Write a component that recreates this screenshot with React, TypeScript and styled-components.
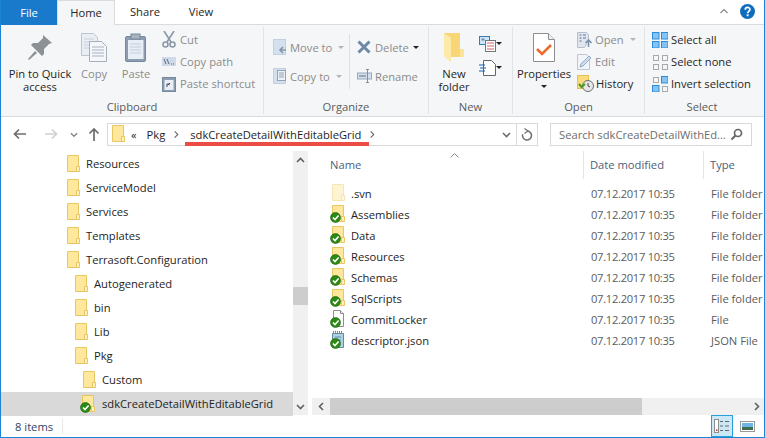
import React from "react";
import styled, { createGlobalStyle } from "styled-components";

const Global = createGlobalStyle`
  html, body { margin: 0; padding: 0; background: #fff; }
  body { font-family: "Open Sans", "Noto Sans", "Liberation Sans", sans-serif; font-size: 11.2px; color: #1e1e1e; }
  * { box-sizing: border-box; }
`;

const Win = styled.div`
  width: 765px; height: 438px; display: flex; flex-direction: column; background: #fff; overflow: hidden; position: relative;
  border-left: 1px solid #1b84d6; border-right: 1px solid #1b84d6; border-bottom: 1px solid #1b84d6;
`;
const TabBar = styled.div`height: 25px; display: flex; align-items: stretch; border-bottom: 1px solid #dadbdc; position: relative;`;
const FileTab = styled.div`width: 56px; background: #1979ca; color: #fff; display: flex; align-items: center; justify-content: center; margin-bottom: -1px;`;
const Tab = styled.div<{ $w: number; $active?: boolean }>`
  width: ${p => p.$w}px; display: flex; align-items: center; justify-content: center; color: #262626;
  ${p => p.$active ? "background:#f5f6f7;border:1px solid #dadbdc;border-bottom:none;margin-bottom:-1px;" : ""}
`;
const TabEnd = styled.div`margin-left: auto; display: flex; align-items: center; gap: 11px; padding-right: 9px;`;
const Ribbon = styled.div`height: 92px; background: #f5f6f7; border-bottom: 1px solid #dadbdc; display: flex; padding-top: 2px;`;
const Group = styled.div<{ $w: number; $last?: boolean }>`
  width: ${p => p.$w}px; height: 87px; display: flex; flex-direction: column; flex: none;
  border-right: ${p => p.$last ? "none" : "1px solid #e2e3e4"};
`;
const GroupBody = styled.div`flex: 1; display: flex; min-height: 0;`;
const GroupLabel = styled.div`height: 15px; line-height: 15px; text-align: center; color: #5b5b5b;`;
const Large = styled.div<{ $w: number; $dim?: boolean; $ml?: number }>`
  width: ${p => p.$w}px; margin-left: ${p => p.$ml ?? 0}px; display: flex; flex-direction: column; align-items: center; text-align: center; line-height: 13px; padding-top: 6px; flex: none;
  color: ${p => p.$dim ? "#8c8c8c" : "#262626"};
  & > svg { height: 29px; margin-bottom: 5px; flex: none; }
`;
const SmallCol = styled.div<{ $ml?: number; $rh?: number; $pt?: number; $w?: number }>`
  margin-left: ${p => p.$ml ?? 0}px; padding-top: ${p => p.$pt ?? 2}px; display: flex; flex-direction: column; flex: none;
  ${p => p.$w ? `width: ${p.$w}px;` : ""}
  & > div { height: ${p => p.$rh ?? 22}px; }
`;
const SmallRow = styled.div<{ $dim?: boolean; $gap?: number }>`
  display: flex; align-items: center; gap: ${p => p.$gap ?? 3}px; white-space: nowrap;
  color: ${p => p.$dim ? "#8c8c8c" : "#262626"};
  & > svg { flex: none; }
`;
const VDivider = styled.div<{ $ml: number }>`width: 1px; height: 55px; margin: 7px 0 0 ${p => p.$ml}px; background: #dfe0e1; flex: none;`;
const MiniCaret = styled.span<{ $dark?: boolean; $ml?: number }>`
  width: 0; height: 0; border-left: 3.5px solid transparent; border-right: 3.5px solid transparent;
  border-top: 3.5px solid ${p => p.$dark ? "#222" : "#b4b4b4"}; display: inline-block; margin-left: ${p => p.$ml ?? 3}px; flex: none;
`;
const CaretLine = styled.div`height: 13px; display: flex; align-items: center; justify-content: center; & > span { margin: 0; }`;

const AddressRow = styled.div`height: 34px; display: flex; align-items: center; position: relative; padding-top: 1px;`;
const NavBtns = styled.div`width: 106px; display: flex; align-items: center; flex: none; padding-left: 12px;`;
const AddressBox = styled.div`width: 431px; height: 23px; border: 1px solid #d9d9d9; display: flex; align-items: center; flex: none; padding-left: 3px;`;
const Crumb = styled.span<{ $ml: number }>`margin-left: ${p => p.$ml}px; white-space: nowrap; color: #1e1e1e; display: flex; align-items: center;`;
const AddrEnd = styled.div`margin-left: auto; display: flex; align-items: center; height: 100%;`;
const RefreshBox = styled.div`width: 21px; height: 21px; border-left: 1px solid #d9d9d9; margin-left: 5px; display: flex; align-items: center; justify-content: center;`;
const SearchBox = styled.div`
  width: 202px; height: 23px; margin-left: 12px; border: 1px solid #d9d9d9; display: flex; align-items: center; justify-content: space-between;
  padding: 0 8px; color: #6d6d6d; flex: none; white-space: nowrap; font-size: 11.2px;
`;
const RedLine = styled.div`position: absolute; left: 184px; top: 25px; width: 184px; height: 4px; background: #ec4b46;`;

const Main = styled.div`height: 265px; display: flex; min-height: 0;`;
const NavPane = styled.div`width: 292px; display: flex; flex-direction: column; padding-top: 1px; flex: none;`;
const NavRow = styled.div<{ $indent: number; $sel?: boolean }>`
  height: 24px; flex: none; display: flex; align-items: center; padding-left: ${p => p.$indent}px; gap: ${p => p.$sel ? 7 : 5}px; white-space: nowrap; color: #1e1e1e;
  background: ${p => p.$sel ? "#d9d9d9" : "transparent"};
`;
const VScroll = styled.div`width: 15px; background: #f0f0f0; display: flex; flex-direction: column; align-items: center; justify-content: space-between; flex: none; position: relative; padding: 5px 0 4px;`;
const VThumb = styled.div`position: absolute; left: 0; top: 136px; width: 15px; height: 18px; background: #cdcdcd;`;
const ListPane = styled.div`margin-left: 4px; flex: 1; min-width: 0; display: flex; flex-direction: column; position: relative;`;
const Head = styled.div`height: 28px; display: flex; flex: none; color: #4c607a;`;
const HeadCell = styled.div<{ $w: number; $pl: number; $sep?: boolean }>`
  width: ${p => p.$w}px; padding-left: ${p => p.$pl}px; flex: none; display: flex; align-items: center; padding-bottom: 1px;
  border-right: ${p => p.$sep ? "1px solid #e5e5e5" : "none"};
`;
const SortCaret = styled.svg`position: absolute; left: 138px; top: 2px;`;
const Rows = styled.div`flex: 1; padding-top: 4px; min-height: 0;`;
const Row = styled.div`height: 21px; display: flex; align-items: center; white-space: nowrap;`;
const NameCell = styled.div`width: 273px; padding-left: 18px; display: flex; align-items: center; gap: 6px; flex: none; color: #1e1e1e;`;
const DateCell = styled.div`width: 120px; padding-left: 6px; color: #5c5c5c; flex: none; letter-spacing: -0.3px;`;
const TypeCell = styled.div`padding-left: 6px; color: #5c5c5c; overflow: hidden;`;
const HScroll = styled.div`height: 17px; background: #f0f0f0; display: flex; align-items: center; justify-content: space-between; flex: none; position: relative; padding: 0 3px 0 5px;`;
const HThumb = styled.div`position: absolute; left: 18px; top: 0; width: 312px; height: 17px; background: #cdcdcd;`;
const Status = styled.div`flex: 1; display: flex; align-items: center; padding-left: 14px; color: #2f4466; position: relative;`;
const StatusSep = styled.div`width: 1px; height: 16px; background: #e8e8e8; margin-left: 9px;`;
const ViewBtns = styled.div`margin-left: auto; display: flex; align-items: center; gap: 3px; padding-right: 6px;`;
const ViewBtn = styled.div<{ $on?: boolean }>`
  width: 22px; height: 22px; display: flex; align-items: center; justify-content: center;
  ${p => p.$on ? "background:#cce8f7;border:1px solid #26a0da;" : ""}
`;

const Check = () => (
  <g>
    <circle cx="5.5" cy="12.5" r="5" fill="#2a8a14" stroke="#1c5e10" strokeWidth=".6" />
    <path d="M3 12.5l2 2 3.600-4" fill="none" stroke="#fff" strokeWidth="1.600" />
  </g>
);
const FolderShape = ({ x = 0, light }: { x?: number; light?: boolean }) => (
  <g opacity={light ? 0.45 : 1}>
    <path d={`M${x + .5} .5h11v16h-11z`} fill="#ffe89b" stroke="#e8c662" />
    <path d={`M${x + 9.500} 11.500h3v5h-3z`} fill="#fff2bd" stroke="#e8c662" />
  </g>
);
const Folder = ({ check, light }: { check?: boolean; light?: boolean }) => (
  <svg width="15" height="18" viewBox="0 0 15 18" style={{ flex: "none" }}>
    <FolderShape x={check || light ? 2 : 1} light={light} />
    {check && <Check />}
  </svg>
);
const FileIcon = () => (
  <svg width="15" height="18" viewBox="0 0 15 18" style={{ flex: "none" }}>
    <path d="M3.500 .5h7l3 3v13h-10z" fill="#fff" stroke="#8d8d8d" />
    <path d="M10.500 .5v3h3" fill="#eee" stroke="#8d8d8d" />
    <Check />
  </svg>
);
const JsonIcon = () => (
  <svg width="15" height="18" viewBox="0 0 15 18" style={{ flex: "none" }}>
    <path d="M2.500 2.500h11v14h-11z" fill="#a9d3e6" stroke="#6a8a99" />
    <path d="M3 .8h10" stroke="#777" strokeDasharray="1 1" strokeWidth="2" />
    <path d="M5 6h6M5 9h6" stroke="#5e8ea5" />
    <Check />
  </svg>
);
const Pin = () => (
  <svg width="30" height="29" viewBox="0 0 30 29">
    <path d="M18 2l9 8-3 1-5 5 0 5-2 2-11-11 2-2 5 0 5-5z" fill="#8b9196" />
    <path d="M10 18l-7 8 1 1 8-7z" fill="#8b9196" />
  </svg>
);
const DocCopy = () => (
  <svg width="26" height="29" viewBox="0 0 26 29">
    <path d="M.5 .5h12l4 4v18H.5z" fill="#e9eef5" stroke="#bcc4cf" />
    <path d="M3 6h10M3 9h10M3 12h10M3 15h10" stroke="#c9d0da" />
    <path d="M8.500 8.500h12l5 5v15h-17z" fill="#f4f6f9" stroke="#a6afbd" />
    <path d="M11 14h12M11 17h12M11 20h12M11 23h12" stroke="#a9b3c2" />
  </svg>
);
const Clipboard = () => (
  <svg width="22" height="29" viewBox="0 0 22 29">
    <rect x=".5" y="3.500" width="20" height="25" rx="1.500" fill="#8c9db1" stroke="#77889c" />
    <rect x="3" y="7" width="15.500" height="19" fill="#e8eef5" />
    <path d="M5 11h11M5 14h11M5 17h11M5 20h11" stroke="#c2cddb" />
    <rect x="6" y="1" width="9" height="5" fill="#a9b4c2" stroke="#77889c" />
  </svg>
);
const Scissors = () => (
  <svg width="14" height="17" viewBox="0 0 14 17" fill="none" stroke="#8a97a8" strokeWidth="1.600">
    <path d="M2 0l7 11M12 0L5 11" /><circle cx="3.500" cy="13.500" r="2.500" /><circle cx="10.500" cy="13.500" r="2.500" />
  </svg>
);
const CopyPathI = () => (
  <svg width="14" height="9" viewBox="0 0 14 9"><rect width="14" height="9" fill="#cfd9e8" /><path d="M2 2l2 5M5 2l2 5M9 7h1M11 7h1" stroke="#5d6d85" /></svg>
);
const PasteShortcut = () => (
  <svg width="14" height="16" viewBox="0 0 14 16"><rect x=".5" y="1.500" width="13" height="14" fill="#8c9db1" stroke="#77889c" /><rect x="2.500" y="4" width="9" height="10" fill="#e8eef5" /><path d="M5 11V8h3M6 9l2-2" stroke="#445" fill="none" /></svg>
);
const MoveTo = () => (
  <svg width="14" height="16" viewBox="0 0 14 16"><rect x=".5" y=".5" width="12" height="15" fill="#d5e0ef" stroke="#c3cfe0" /><path d="M13 11H7M10 8l-3 3 3 3" stroke="#8296ad" strokeWidth="1.600" fill="none" /></svg>
);
const CopyTo = () => (
  <svg width="14" height="16" viewBox="0 0 14 16"><rect x=".5" y=".5" width="12" height="15" fill="#d5e0ef" stroke="#c3cfe0" /><rect x="4.500" y="2.500" width="8" height="10" fill="#edf1f6" stroke="#93a3b7" /><path d="M6 5h5M6 7h5M6 9h5" stroke="#93a3b7" /></svg>
);
const DeleteI = () => (
  <svg width="14" height="14" viewBox="0 0 14 14"><path d="M1.500 1.500l11 11M12.500 1.500l-11 11" stroke="#6f88a8" strokeWidth="3" /></svg>
);
const RenameI = () => (
  <svg width="15" height="14" viewBox="0 0 15 14" fill="none"><rect x=".5" y="4" width="14" height="6" fill="#d5e0ef" stroke="#98a8bc" /><path d="M2 7h7" stroke="#98a8bc" strokeWidth="2" /><path d="M10 .5h3M11.500 .5v13M10 13.500h3" stroke="#7f8fa3" transform="translate(-1 0)" /></svg>
);
const BigFolder = () => (
  <svg width="20" height="29" viewBox="0 0 20 29">
    <path d="M0 0h16v16h4v8H7V29L0 23z" fill="#f8d676" />
    <path d="M0 0l7 5v24l-7-6z" fill="#fde9a8" />
    <path d="M16 16h4v8h-4z" fill="#fbe398" />
  </svg>
);
const NewItem = () => (
  <svg width="17" height="16" viewBox="0 0 17 16"><rect x=".5" y=".5" width="10" height="8" fill="#cfe4f5" stroke="#3b7cb0" /><path d="M2.500 2.500h3v2h-3z" fill="#6b8fb0" /><rect x="6.500" y="4.500" width="10" height="11" fill="#fff" stroke="#777" /><path d="M8 7h7M8 10h7M8 13h7" stroke="#d6636a" /></svg>
);
const EasyAccess = () => (
  <svg width="17" height="16" viewBox="0 0 17 16"><path d="M4.500 .5h8l4 4v11h-12z" fill="#fff" stroke="#666" /><path d="M0 5h6M1 8h6M0 11h6" stroke="#1d5ea5" strokeWidth="1.200" /></svg>
);
const PropsI = () => (
  <svg width="22" height="29" viewBox="0 0 22 29">
    <path d="M.5 .5h15l6 6v22H.5z" fill="#fff" stroke="#8e8e8e" />
    <path d="M15.500 .5v6h6" fill="#eee" stroke="#8e8e8e" />
    <path d="M4 16l5 5 9-9" fill="none" stroke="#ec6a2c" strokeWidth="2.600" />
  </svg>
);
const OpenI = () => (
  <svg width="15" height="16" viewBox="0 0 15 16"><path d="M.5 .5h9l2 2v6l-4 7H.5z" fill="#dfe6f0" stroke="#b5bfcc" /><path d="M2.500 3h2M6 3h3M2.500 6h2M6 6h3M2.500 9h2" stroke="#8b9bb0" strokeWidth="1.300" /><path d="M11.500 15V8M8.500 11l3-3 3 3" stroke="#7d93ad" strokeWidth="1.600" fill="none" /></svg>
);
const EditI = () => (
  <svg width="15" height="16" viewBox="0 0 15 16"><path d="M.5 .5h9l3 3v12H.5z" fill="#f1f4f8" stroke="#bcc6d4" /><path d="M3 13l1-3 8-8 2 2-8 8z" fill="#cddcee" stroke="#93a8c1" /></svg>
);
const HistoryI = () => (
  <svg width="17" height="17" viewBox="0 0 17 17"><rect x=".5" y=".5" width="11" height="13" fill="#fbdc7c" stroke="#e6c055" /><circle cx="11" cy="11" r="5.500" fill="#e6e6e6" stroke="#6e6e6e" /><path d="M11 8v3l2 1" stroke="#444" fill="none" /><path d="M2 9l2.500 3L8 9" fill="none" stroke="#4a9a1e" strokeWidth="2" /></svg>
);
const Grid = ({ on }: { on: boolean[] }) => (
  <svg width="16" height="16" viewBox="0 0 16 16">
    {[[0, 0], [9, 0], [0, 9], [9, 9]].map(([x, y], i) =>
      on[i]
        ? <rect key={i} x={x + .5} y={y + .5} width="6.500" height="6.500" fill="#85c4f2" stroke="#2a8bdc" />
        : <rect key={i} x={x + 1.500} y={y + 1.500} width="5" height="5" fill="none" stroke="#a9a9a9" />)}
  </svg>
);
const Help = () => (
  <svg width="15" height="15" viewBox="0 0 15 15" style={{ flex: "none" }}>
    <circle cx="7.500" cy="7.500" r="7.500" fill="#0f6cbd" />
    <path d="M5.300 5.700c0-3 4.600-3 4.600-.2 0 1.800-2.300 1.800-2.300 3.700" stroke="#fff" strokeWidth="1.700" fill="none" />
    <rect x="6.700" y="10.300" width="1.900" height="1.900" fill="#fff" />
  </svg>
);
const Chev = ({ d, c = "#6d6d6d", w = 9, h = 9, sw = 1.6 }: { d: string; c?: string; w?: number; h?: number; sw?: number }) => (
  <svg width={w} height={h} viewBox="0 0 9 9" style={{ flex: "none" }}><path d={d} fill="none" stroke={c} strokeWidth={sw} /></svg>
);
const UP = "M1 6l3.500-3.500L8 6", DOWN = "M1 3l3.500 3.500L8 3", LEFT = "M6 1L2.500 4.500 6 8", RIGHT = "M3 1l3.500 3.500L3 8";

const tree: [string, number][] = [
  ["Resources", 65], ["ServiceModel", 65], ["Services", 65], ["Templates", 65], ["Terrasoft.Configuration", 65],
  ["Autogenerated", 73], ["bin", 73], ["Lib", 73], ["Pkg", 73], ["Custom", 81],
];
const files: [string, string, string, "svn" | "folder" | "file" | "json"][] = [
  [".svn", "07.12.2017 10:35", "File folder", "svn"],
  ["Assemblies", "07.12.2017 10:35", "File folder", "folder"],
  ["Data", "07.12.2017 10:35", "File folder", "folder"],
  ["Resources", "07.12.2017 10:35", "File folder", "folder"],
  ["Schemas", "07.12.2017 10:35", "File folder", "folder"],
  ["SqlScripts", "07.12.2017 10:35", "File folder", "folder"],
  ["CommitLocker", "07.12.2017 10:35", "File", "file"],
  ["descriptor.json", "07.12.2017 10:35", "JSON File", "json"],
];

export default function App() {
  return (
    <Win>
      <Global />
      <TabBar>
        <FileTab>File</FileTab>
        <Tab $w={58} $active>Home</Tab>
        <Tab $w={60}>Share</Tab>
        <Tab $w={52}>View</Tab>
        <TabEnd>
          <Chev d={UP} c="#8a8a8a" w={10} h={9} sw={1.2} />
          <Help />
        </TabEnd>
      </TabBar>
      <Ribbon>
        <Group $w={263}>
          <GroupBody>
            <Large $w={72} $ml={3}><Pin />Pin to Quick<br />access</Large>
            <Large $w={36} $dim><DocCopy />Copy</Large>
            <Large $w={40} $ml={4} $dim><Clipboard />Paste</Large>
            <SmallCol $ml={6}>
              <SmallRow $dim $gap={4}><Scissors />Cut</SmallRow>
              <SmallRow $dim $gap={4}><CopyPathI />Copy path</SmallRow>
              <SmallRow $dim $gap={4}><PasteShortcut />Paste shortcut</SmallRow>
            </SmallCol>
          </GroupBody>
          <GroupLabel>Clipboard</GroupLabel>
        </Group>
        <Group $w={165}>
          <GroupBody>
            <SmallCol $ml={9} $w={64} $rh={29} $pt={6}>
              <SmallRow $dim><MoveTo />Move to<MiniCaret /></SmallRow>
              <SmallRow $dim><CopyTo />Copy to<MiniCaret /></SmallRow>
            </SmallCol>
            <VDivider $ml={12} />
            <SmallCol $ml={7} $rh={29} $pt={6}>
              <SmallRow $dim $gap={4}><DeleteI />Delete<MiniCaret $dark $ml={0} /></SmallRow>
              <SmallRow $dim $gap={3}><RenameI />Rename</SmallRow>
            </SmallCol>
          </GroupBody>
          <GroupLabel>Organize</GroupLabel>
        </Group>
        <Group $w={84}>
          <GroupBody>
            <Large $w={50}><BigFolder />New<br />folder</Large>
            <SmallCol $rh={24} $pt={5}>
              <SmallRow $gap={0}><NewItem /><MiniCaret $dark $ml={0} /></SmallRow>
              <SmallRow $gap={0}><EasyAccess /><MiniCaret $dark $ml={0} /></SmallRow>
            </SmallCol>
          </GroupBody>
          <GroupLabel>New</GroupLabel>
        </Group>
        <Group $w={132}>
          <GroupBody>
            <Large $w={56} $ml={3}><PropsI />Properties<CaretLine><MiniCaret $dark /></CaretLine></Large>
            <SmallCol $ml={5}>
              <SmallRow $dim><OpenI />Open<MiniCaret /></SmallRow>
              <SmallRow $dim><EditI />Edit</SmallRow>
              <SmallRow $gap={2}><HistoryI />History</SmallRow>
            </SmallCol>
          </GroupBody>
          <GroupLabel>Open</GroupLabel>
        </Group>
        <Group $w={114} $last>
          <GroupBody>
            <SmallCol $ml={7}>
              <SmallRow><Grid on={[true, true, true, true]} />Select all</SmallRow>
              <SmallRow><Grid on={[false, false, false, false]} />Select none</SmallRow>
              <SmallRow><Grid on={[false, true, true, false]} />Invert selection</SmallRow>
            </SmallCol>
          </GroupBody>
          <GroupLabel>Select</GroupLabel>
        </Group>
      </Ribbon>
      <AddressRow>
        <NavBtns>
          <svg width="14" height="12" viewBox="0 0 14 12"><path d="M13 6H2M6 1.500L1.500 6 6 10.500" fill="none" stroke="#6d6d6d" strokeWidth="1.700" /></svg>
          <svg width="14" height="12" viewBox="0 0 14 12" style={{ marginLeft: 17 }}><path d="M1 6h11M8 1.500L12.500 6 8 10.500" fill="none" stroke="#d0d0d0" strokeWidth="1.700" /></svg>
          <span style={{ width: 12 }} />
          <Chev d={DOWN} c="#8a8a8a" w={8} h={9} />
          <svg width="12" height="14" viewBox="0 0 12 14" style={{ marginLeft: 10 }}><path d="M6 14V2M1.500 6.500L6 2l4.500 4.500" fill="none" stroke="#6d6d6d" strokeWidth="1.700" /></svg>
        </NavBtns>
        <AddressBox>
          <Folder />
          <Crumb $ml={5}>«</Crumb>
          <Crumb $ml={10}>Pkg</Crumb>
          <Crumb $ml={7}><Chev d={RIGHT} c="#666" w={8} h={9} sw={1.2} /></Crumb>
          <Crumb $ml={10}>sdkCreateDetailWithEditableGrid</Crumb>
          <Crumb $ml={7}><Chev d={RIGHT} c="#666" w={8} h={9} sw={1.2} /></Crumb>
          <AddrEnd>
            <Chev d={DOWN} c="#6d6d6d" />
            <RefreshBox>
              <svg width="12" height="13" viewBox="0 0 12 13" fill="none"><path d="M6 3a4.500 4.500 0 1 1-4.300 3.200" stroke="#6d6d6d" strokeWidth="1.500" /><path d="M3.500 0.500L7 3 3.500 5.500" stroke="#6d6d6d" strokeWidth="1.200" /></svg>
            </RefreshBox>
          </AddrEnd>
        </AddressBox>
        <SearchBox>
          Search sdkCreateDetailWithEd...
          <svg width="13" height="13" viewBox="0 0 13 13" fill="none"><circle cx="8" cy="5" r="3.500" stroke="#666" strokeWidth="1.700" /><path d="M5.500 7.500L1.500 11.500" stroke="#666" strokeWidth="2" /></svg>
        </SearchBox>
        <RedLine />
      </AddressRow>
      <Main>
        <NavPane>
          {tree.map(([n, i]) => (
            <NavRow key={n} $indent={i}><Folder />{n}</NavRow>
          ))}
          <NavRow $indent={79} $sel><Folder check />sdkCreateDetailWithEditableGrid</NavRow>
        </NavPane>
        <VScroll>
          <Chev d={UP} c="#606060" />
          <VThumb />
          <Chev d={DOWN} c="#606060" />
        </VScroll>
        <ListPane>
          <Head>
            <HeadCell $w={272} $pl={18} $sep>Name</HeadCell>
            <HeadCell $w={120} $pl={6} $sep>Date modified</HeadCell>
            <HeadCell $w={60} $pl={6}>Type</HeadCell>
          </Head>
          <SortCaret width="9" height="5" viewBox="0 0 9 5"><path d="M.5 4.500l4-4 4 4" fill="none" stroke="#8a8a8a" /></SortCaret>
          <Rows>
            {files.map(([n, d, t, k]) => (
              <Row key={n}>
                <NameCell>
                  {k === "svn" && <Folder light />}
                  {k === "folder" && <Folder check />}
                  {k === "file" && <FileIcon />}
                  {k === "json" && <JsonIcon />}
                  {n}
                </NameCell>
                <DateCell>{d}</DateCell>
                <TypeCell>{t}</TypeCell>
              </Row>
            ))}
          </Rows>
          <HScroll>
            <Chev d={LEFT} c="#606060" />
            <HThumb />
            <Chev d={RIGHT} c="#606060" />
          </HScroll>
        </ListPane>
      </Main>
      <Status>
        8 items
        <StatusSep />
        <ViewBtns>
          <ViewBtn $on>
            <svg width="16" height="14" viewBox="0 0 16 14"><rect x=".5" y=".5" width="4" height="13" fill="#fff" stroke="#8e8e8e" /><path d="M6 2.500h3M11 2.500h4M6 7h3M11 7h4M6 11.500h3M11 11.500h4" stroke="#666" /><rect x="2" y="10.500" width="1.500" height="1.500" fill="#c33" /></svg>
          </ViewBtn>
          <ViewBtn>
            <svg width="15" height="11" viewBox="0 0 15 11"><rect x=".5" y=".5" width="14" height="10" fill="#fff" stroke="#9a9a9a" /><rect x="2" y="2" width="11" height="4" fill="#6fb6e6" /><rect x="2" y="6" width="11" height="3" fill="#3f6f4f" /></svg>
          </ViewBtn>
        </ViewBtns>
      </Status>
    </Win>
  );
}
